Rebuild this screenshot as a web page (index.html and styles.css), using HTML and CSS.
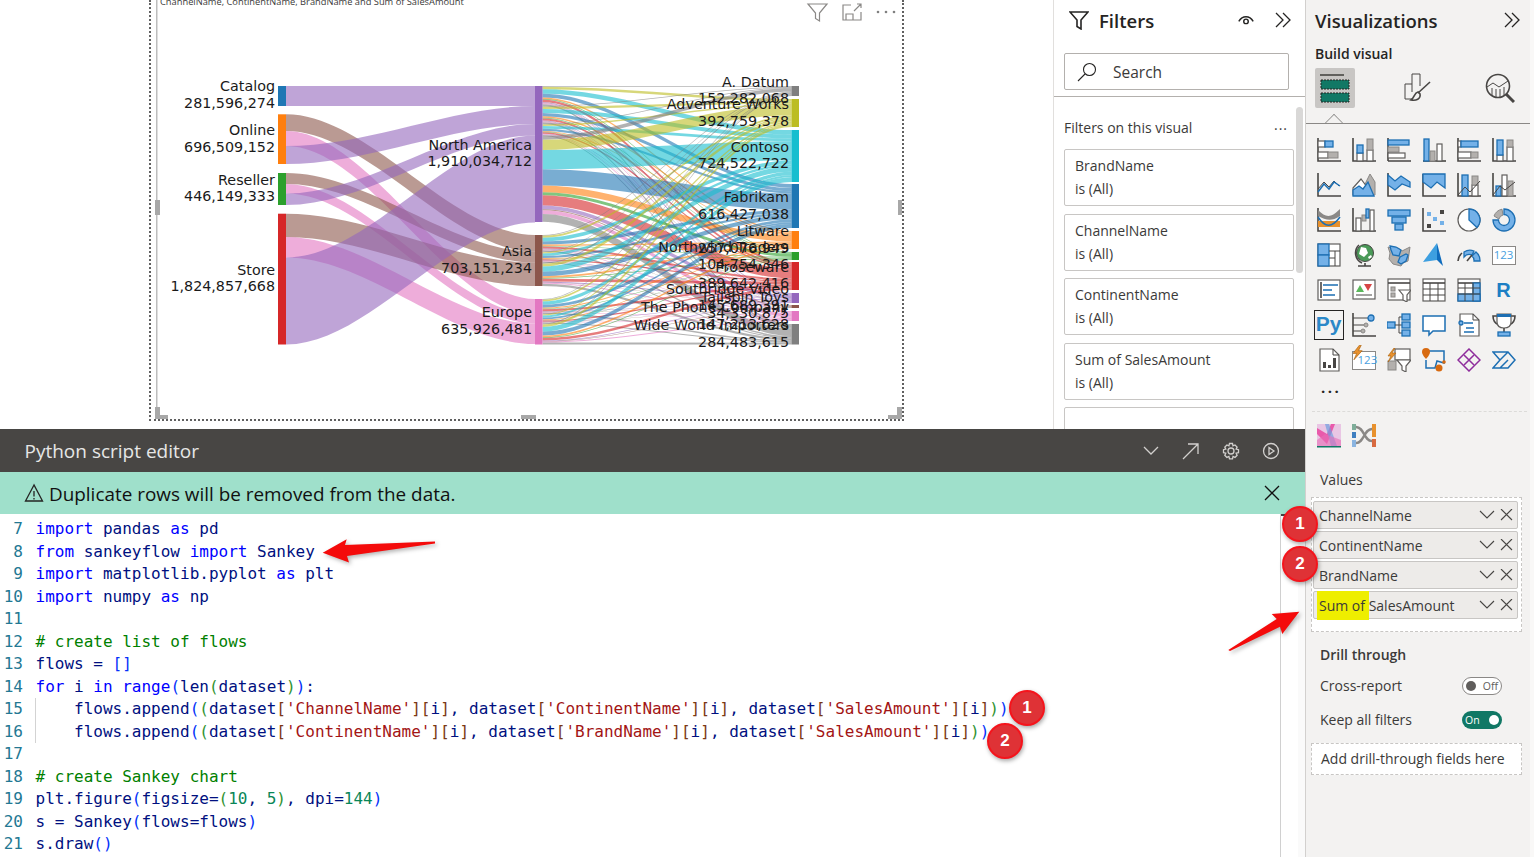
FILE: index.html
```html
<!DOCTYPE html>
<html lang="en">
<head>
    <meta charset="UTF-8">
    <title>Python script editor - Sankey</title>
    <link rel="stylesheet" href="styles.css">
</head>
<body>
<div class="main">
    <div class="report">
        <!-- Report canvas -->
        <div class="canvas">
            <div class="visual">
                <svg class="chart" viewBox="151 0 751 419">
                    <rect class="frame-line" x="156" y="0" width="1.5" height="418"/>
                    <text class="chart-title" x="160" y="5">ChannelName, ContinentName, BrandName and Sum of SalesAmount</text>
                    <g id="flows"></g>
                    <g class="nodes">
                        <rect x="278" y="86" width="8" height="20" fill="#1f77b4"/>
                        <rect x="278" y="114.3" width="8" height="49.7" fill="#ff7f0e"/>
                        <rect x="278" y="173" width="8" height="32" fill="#2ca02c"/>
                        <rect x="278" y="213.7" width="8" height="130.8" fill="#d62728"/>
                        <rect x="535" y="86" width="7.5" height="136" fill="#9467bd"/>
                        <rect x="535" y="235" width="7.5" height="51" fill="#8c564b"/>
                        <rect x="535" y="299" width="7.5" height="45.5" fill="#e377c2"/>
                        <rect x="791.5" y="86" width="7.5" height="10" fill="#7f7f7f"/>
                        <rect x="791.5" y="99" width="7.5" height="28" fill="#bcbd22"/>
                        <rect x="791.5" y="130" width="7.5" height="52" fill="#17becf"/>
                        <rect x="791.5" y="184" width="7.5" height="44" fill="#1f77b4"/>
                        <rect x="791.5" y="231" width="7.5" height="18" fill="#ff7f0e"/>
                        <rect x="791.5" y="252" width="7.5" height="8" fill="#2ca02c"/>
                        <rect x="791.5" y="262" width="7.5" height="28" fill="#d62728"/>
                        <rect x="791.5" y="293" width="7.5" height="10" fill="#9467bd"/>
                        <rect x="791.5" y="305" width="7.5" height="3" fill="#8c564b"/>
                        <rect x="791.5" y="311" width="7.5" height="10" fill="#e377c2"/>
                        <rect x="791.5" y="324" width="7.5" height="20.5" fill="#7f7f7f"/>
                    </g>
                    <g class="labels">
                        <text x="275" y="91">Catalog</text><text x="275" y="107.5">281,596,274</text>
                        <text x="275" y="135">Online</text><text x="275" y="151.5">696,509,152</text>
                        <text x="275" y="185">Reseller</text><text x="275" y="201">446,149,333</text>
                        <text x="275" y="275">Store</text><text x="275" y="291">1,824,857,668</text>
                        <text x="532" y="150">North America</text><text x="532" y="166">1,910,034,712</text>
                        <text x="532" y="256">Asia</text><text x="532" y="273">703,151,234</text>
                        <text x="532" y="317">Europe</text><text x="532" y="334">635,926,481</text>
                        <text x="789" y="87">A. Datum</text><text x="789" y="102.5">152,282,068</text>
                        <text x="789" y="109">Adventure Works</text><text x="789" y="125.5">392,759,378</text>
                        <text x="789" y="151.5">Contoso</text><text x="789" y="168">724,522,722</text>
                        <text x="789" y="202">Fabrikam</text><text x="789" y="218.5">616,427,038</text>
                        <text x="789" y="236">Litware</text><text x="789" y="252.5">257,076,949</text>
                        <text x="789" y="252">Northwind Traders</text><text x="789" y="268.5">104,754,346</text>
                        <text x="789" y="272">Proseware</text><text x="789" y="288">389,642,416</text>
                        <text x="789" y="293.5">Southridge Video</text><text x="789" y="310">145,689,391</text>
                        <text x="789" y="302">Tailspin Toys</text><text x="789" y="318">34,330,875</text>
                        <text x="789" y="312">The Phone Company</text><text x="789" y="328.5">147,213,628</text>
                        <text x="789" y="330">Wide World Importers</text><text x="789" y="346.5">284,483,615</text>
                    </g>
                    <!-- hover icons of the visual -->
                    <path class="vis-ico" d="M808 4h19l-7.500 9v8l-4-2.500v-5.500z"/>
                    <path class="vis-ico" d="M851 5h-8v15h18v-8M846 20v-6h7v6M854 11l7-7M857 4h4v4"/>
                    <g fill="#808080"><circle cx="878" cy="12" r="1.300"/><circle cx="886" cy="12" r="1.300"/><circle cx="894" cy="12" r="1.300"/></g>
                    <!-- resize handles -->
                    <g fill="#a8a8a8">
                        <rect x="155" y="200" width="5" height="15"/>
                        <rect x="898" y="200" width="5" height="15"/>
                        <rect x="521" y="415" width="15" height="4"/>
                        <path d="M155 407h5v8h8v4h-13z"/>
                        <path d="M902 407v12h-14v-4h9v-8z"/>
                    </g>
                </svg>
            </div>
        </div>

        <!-- Filters pane -->
        <div class="filters">
            <div class="pane-head">
                <svg class="head-ico" viewBox="0 0 20 20"><path d="M1 2h18l-7 8v9l-4-2.500v-6.500z"/></svg>
                <span class="pane-title">Filters</span>
                <svg class="eye-ico" viewBox="0 0 20 14"><path d="M2 8c4-7 12-7 16 0"/><circle cx="10" cy="8" r="2.500"/></svg>
                <svg class="chev-ico" viewBox="0 0 16 16"><path d="M1 1l7 7-7 7M8 1l7 7-7 7"/></svg>
            </div>
            <div class="search">
                <svg class="search-ico" viewBox="0 0 20 20"><circle cx="12.500" cy="7.500" r="6"/><path d="M8 12l-7 7"/></svg>
                <span>Search</span>
            </div>
            <div class="filter-list">
                <div class="filter-caption"><span>Filters on this visual</span><span class="more">...</span></div>
                <div class="filter-card">BrandName<br>is (All)</div>
                <div class="filter-card">ChannelName<br>is (All)</div>
                <div class="filter-card">ContinentName<br>is (All)</div>
                <div class="filter-card">Sum of SalesAmount<br>is (All)</div>
                <div class="filter-card"></div>
                <div class="filter-scroll"></div>
            </div>
        </div>
    </div>

    <!-- Python script editor -->
    <div class="editor">
        <div class="editor-head">
            <span class="editor-title">Python script editor</span>
            <svg class="ed-ico" viewBox="0 0 20 20"><path d="M3 6l7 7 7-7"/></svg>
            <svg class="ed-ico" viewBox="0 0 20 20"><path d="M2 18L17 3M7 3h10v10"/></svg>
            <svg class="ed-ico" viewBox="0 0 20 20"><circle cx="10" cy="10" r="3"/><path d="M8.500 2.500h3l.5 2.400 2-.9 2.100 2.100-1 2 2.400.6v3l-2.400.5 1 2.100-2.100 2.100-2-1-.5 2.400h-3l-.6-2.400-2 1-2.100-2.100 1-2.100-2.300-.5v-3l2.300-.6-1-2 2.100-2.100 2 .9z"/></svg>
            <svg class="ed-ico" viewBox="0 0 20 20"><circle cx="10" cy="10" r="7.500"/><path d="M8 6.500l5 3.500-5 3.500z"/></svg>
        </div>
        <div class="alert">
            <svg class="warn-ico" viewBox="0 0 20 20"><path d="M10 2L1.500 18h17zM10 8v5.500M10 15v1.500"/></svg>
            <span class="alert-text">Duplicate rows will be removed from the data.</span>
            <svg class="close-ico" viewBox="0 0 16 16"><path d="M1 1l14 14M15 1L1 15"/></svg>
        </div>
        <div class="code-wrap">
            <div class="code">
                <div class="ln"><i>7</i><span class="k">import</span> pandas <span class="k">as</span> pd</div>
                <div class="ln"><i>8</i><span class="k">from</span> sankeyflow <span class="k">import</span> Sankey</div>
                <div class="ln"><i>9</i><span class="k">import</span> matplotlib.pyplot <span class="k">as</span> plt</div>
                <div class="ln"><i>10</i><span class="k">import</span> numpy <span class="k">as</span> np</div>
                <div class="ln"><i>11</i></div>
                <div class="ln"><i>12</i><span class="c"># create list of flows</span></div>
                <div class="ln"><i>13</i>flows = <span class="b1">[]</span></div>
                <div class="ln"><i>14</i><span class="k">for</span> i <span class="k">in</span> <span class="k">range</span><span class="b1">(</span>len<span class="b2">(</span>dataset<span class="b2">)</span><span class="b1">)</span>:</div>
                <div class="ln guide"><i>15</i>    flows.append<span class="b1">(</span><span class="b2">(</span>dataset<span class="b3">[</span><span class="s">'ChannelName'</span><span class="b3">][</span>i<span class="b3">]</span>, dataset<span class="b3">[</span><span class="s">'ContinentName'</span><span class="b3">][</span>i<span class="b3">]</span>, dataset<span class="b3">[</span><span class="s">'SalesAmount'</span><span class="b3">][</span>i<span class="b3">]</span><span class="b2">)</span><span class="b1">)</span></div>
                <div class="ln guide"><i>16</i>    flows.append<span class="b1">(</span><span class="b2">(</span>dataset<span class="b3">[</span><span class="s">'ContinentName'</span><span class="b3">][</span>i<span class="b3">]</span>, dataset<span class="b3">[</span><span class="s">'BrandName'</span><span class="b3">][</span>i<span class="b3">]</span>, dataset<span class="b3">[</span><span class="s">'SalesAmount'</span><span class="b3">][</span>i<span class="b3">]</span><span class="b2">)</span><span class="b1">)</span></div>
                <div class="ln"><i>17</i></div>
                <div class="ln"><i>18</i><span class="c"># create Sankey chart</span></div>
                <div class="ln"><i>19</i>plt.figure<span class="b1">(</span>figsize=<span class="b2">(</span><span class="n">10</span>, <span class="n">5</span><span class="b2">)</span>, dpi=<span class="n">144</span><span class="b1">)</span></div>
                <div class="ln"><i>20</i>s = Sankey<span class="b1">(</span>flows=flows<span class="b1">)</span></div>
                <div class="ln"><i>21</i>s.draw<span class="b1">()</span></div>
            </div>
            <div class="code-scroll"></div>
        </div>
    </div>
</div>

<!-- Visualizations pane -->
<div class="viz">
    <div class="pane-head viz-head">
        <span class="pane-title">Visualizations</span>
        <svg class="chev-ico" viewBox="0 0 16 16"><path d="M1 1l7 7-7 7M8 1l7 7-7 7"/></svg>
    </div>
    <div class="build-label">Build visual</div>
    <div class="build-tabs">
        <div class="tab active">
            <svg viewBox="0 0 30 30" width="30" height="30"><path class="a" d="M0 2h24"/><rect class="grid-cell" x="1" y="7" width="28" height="9"/><rect class="grid-cell" x="1" y="20" width="28" height="9"/></svg>
        </div>
        <div class="tab">
            <svg viewBox="0 0 30 30" width="30" height="30"><path class="a thin" d="M9 26H2V11h7V1h8v12M9 11v8"/><path class="a" d="M27 9L15 20"/><path class="a" d="M15 19c-4 1-3 5-7 8 5 1 10-1 9-6z"/></svg>
        </div>
        <div class="tab">
            <svg viewBox="0 0 30 30" width="30" height="30"><circle class="a" cx="13" cy="13" r="11.500"/><path class="a thin" d="M2 14l6-4 6 4 9-6M7 15v8M11 16v8M15 16v8M19 14v8"/><path class="a thick" d="M21 21l8 8"/></svg>
        </div>
    </div>
    <div class="build-rule"><span class="notch"></span></div>

    <div class="gallery">
        <!-- row 1 -->
        <svg class="ico" viewBox="0 0 24 24"><path class="a" d="M1 0v23h23"/><rect class="w" x="1" y="3" width="7" height="6"/><rect class="b" x="8" y="3" width="8" height="6"/><rect class="w" x="1" y="14" width="10" height="6"/><rect class="g" x="11" y="14" width="10" height="6"/></svg>
        <svg class="ico" viewBox="0 0 24 24"><path class="a" d="M1 0v23h23"/><rect class="w" x="5" y="15" width="6" height="8"/><rect class="b" x="5" y="7" width="6" height="8"/><rect class="w" x="15" y="12" width="6" height="11"/><rect class="g" x="15" y="1" width="6" height="11"/></svg>
        <svg class="ico" viewBox="0 0 24 24"><path class="a" d="M1 23h23M1 0v23"/><rect class="b" x="1" y="2" width="21" height="5"/><rect class="g" x="1" y="9" width="11" height="5"/><rect class="w" x="1" y="15" width="17" height="5"/></svg>
        <svg class="ico" viewBox="0 0 24 24"><path class="a" d="M1 23h23"/><rect class="b" x="2" y="1" width="5" height="22"/><rect class="g" x="8" y="13" width="5" height="10"/><rect class="w" x="15" y="6" width="5" height="17"/></svg>
        <svg class="ico" viewBox="0 0 24 24"><path class="a" d="M1 0v23h23"/><rect class="w" x="1" y="3" width="3" height="6"/><rect class="b" x="4" y="3" width="17" height="6"/><rect class="w" x="1" y="14" width="13" height="6"/><rect class="g" x="14" y="14" width="7" height="6"/></svg>
        <svg class="ico" viewBox="0 0 24 24"><path class="a" d="M1 0v23h23"/><rect class="w" x="5" y="17" width="6" height="6"/><rect class="b" x="5" y="2" width="6" height="15"/><rect class="w" x="15" y="9" width="6" height="14"/><rect class="g" x="15" y="2" width="6" height="7"/></svg>
        <!-- row 2 -->
        <svg class="ico" viewBox="0 0 24 24"><path class="a" d="M1 0v23h23"/><path class="a thin" d="M1 16l6-7 5 5 5-6 5 5"/><path class="l" d="M1 19l6-8 5 5 5-7 6 4"/></svg>
        <svg class="ico" viewBox="0 0 24 24"><path class="g" d="M8 22L15 7l3-6 5 8v13z"/><path class="w" d="M1 15l8-9 6 8-4 8H1z"/><path class="b" d="M1 23v-6l6-4 4 3 5-7 6 14z"/></svg>
        <svg class="ico" viewBox="0 0 24 24"><path class="a" d="M1 0v23h23"/><path class="b" d="M1 2l7 6 6-5 9 6v5l-8-3-7 6-7-5z"/></svg>
        <svg class="ico" viewBox="0 0 24 24"><path class="a" d="M1 1v22h23"/><path class="b" d="M1 1h22v14l-8-6-6 6-8-6z"/></svg>
        <svg class="ico" viewBox="0 0 24 24"><path class="a" d="M1 0v23h23"/><rect class="b" x="5" y="2" width="6" height="21"/><rect class="w" x="15" y="12" width="6" height="11"/><rect class="g" x="15" y="3" width="6" height="9"/><path class="a thin" d="M1 22l7-8 5 5 10-11"/></svg>
        <svg class="ico" viewBox="0 0 24 24"><path class="a" d="M1 0v23h23"/><rect class="b" x="4" y="13" width="5" height="10"/><rect class="w" x="10" y="2" width="5" height="21"/><rect class="g" x="16" y="8" width="5" height="15"/><path class="a thin" d="M1 22l7-9 5 4 10-8"/></svg>
        <!-- row 3 -->
        <svg class="ico" viewBox="0 0 24 24"><path class="a" d="M1 0v23h23"/><path d="M1 2c8 8 13 8 22-1v7c-9 6-14 4-22 0z" fill="#8a8886"/><path d="M1 13h22v6H1z" fill="#e8912d"/><path class="l" d="M1 9c7 11 14 11 22 0" stroke-width="2.400"/></svg>
        <svg class="ico" viewBox="0 0 24 24"><path class="a" d="M1 0v23h23"/><rect class="w" x="4" y="10" width="5" height="13"/><rect class="g" x="10" y="7" width="4" height="6"/><rect class="b" x="14" y="1" width="3" height="9"/><rect class="w" x="18" y="2" width="4" height="21"/></svg>
        <svg class="ico" viewBox="0 0 24 24"><rect class="b" x="1" y="2" width="22" height="6"/><rect class="b" x="5" y="9" width="14" height="6"/><rect class="b" x="8" y="16" width="8" height="6"/></svg>
        <svg class="ico" viewBox="0 0 24 24"><path class="a" d="M1 0v23h23"/><rect x="5" y="4" width="4" height="4" fill="#74b1e8"/><rect x="11" y="9" width="4" height="4" fill="#74b1e8"/><rect x="18" y="2" width="4" height="4" fill="#484644"/><rect x="5" y="16" width="4" height="4" fill="#484644"/><rect x="18" y="13" width="4" height="4" fill="#74b1e8"/></svg>
        <svg class="ico" viewBox="0 0 24 24"><circle class="w" cx="12" cy="12" r="11"/><path class="b" d="M12 1a11 11 0 0 1 8 18.500L12 12z"/></svg>
        <svg class="ico" viewBox="0 0 24 24"><path class="g" d="M2 8a11 11 0 0 1 8-6.800l1 5.800a5.500 5.500 0 0 0-4 4z"/><path class="b" fill-rule="evenodd" d="M12 1a11 11 0 1 1-11 11h5.500a5.500 5.500 0 1 0 5.500-5.500z"/></svg>
        <!-- row 4 -->
        <svg class="ico" viewBox="0 0 24 24"><rect class="w" x="1" y="1" width="22" height="22"/><rect class="b" x="1" y="1" width="11" height="11"/><rect class="b" x="1" y="12" width="11" height="11"/><path class="a thin" d="M12 8h11M18 8v15M12 15h6"/></svg>
        <svg class="ico" viewBox="0 0 24 24"><circle cx="13" cy="10" r="8.500" fill="#4a9a58" stroke="#484644"/><path d="M9 4l5 1 2 5-4 4-5-3zM16 14l3-2 1 2-3 2z" fill="#fff"/><path class="a" d="M7 2a11 11 0 0 0 3 18M6 23h13M13 20v3"/></svg>
        <svg class="ico" viewBox="0 0 24 24"><path class="g" d="M1 4l6 2 4-1 4 3 8-4-2 14-5 2-2 3-8-2-4-5 1-6z"/><path class="b" d="M3 3l6 1 5 3-2 6-6-1-2-5zM13 14l6-3 2 1-2 6-5 3-3-2z"/></svg>
        <svg class="ico" viewBox="0 0 24 24"><path d="M15 0l-14 19 14-2z" fill="#3d9fe0"/><path d="M15 0v17l6 6z" fill="#0f6cbd"/></svg>
        <svg class="ico" viewBox="0 0 24 24"><path class="a" d="M1 18a11 11 0 0 1 4-8"/><path class="b" d="M7 9a11 11 0 0 1 10-1l-2 4a7 7 0 0 0-8 2zM19 9a11 11 0 0 1 4 9h-6a6 6 0 0 0-2-5z"/><path class="a" d="M10 18l5-6"/></svg>
        <div class="ico card-ico"><span>123</span></div>
        <!-- row 5 -->
        <svg class="ico" viewBox="0 0 24 24"><rect class="w" x="1" y="2" width="22" height="20"/><path class="a" d="M4 4v16"/><path class="l" d="M6 7h15M6 12h9M6 17h12" stroke-width="2"/></svg>
        <svg class="ico" viewBox="0 0 24 24"><rect class="w" x="1" y="2" width="22" height="19"/><path d="M4 14l4-7 4 7z" fill="#5cb85c"/><path d="M12 6h8l-4 7z" fill="#d64545"/><path class="a thin" d="M4 17h16"/></svg>
        <svg class="ico" viewBox="0 0 24 24"><rect class="w" x="1" y="1" width="22" height="21"/><path class="a" d="M1 5h22"/><rect class="g" x="4" y="9" width="4" height="4"/><rect class="g" x="4" y="15" width="4" height="4"/><path class="w" d="M12 12h12l-4 5v7l-4-2v-5z"/></svg>
        <svg class="ico" viewBox="0 0 24 24"><rect class="w" x="1" y="1" width="22" height="22"/><path class="a" d="M1 5h22"/><path class="a thin" d="M8 5v18M16 5v18M1 11h22M1 17h22"/></svg>
        <svg class="ico" viewBox="0 0 24 24"><rect class="w" x="1" y="1" width="22" height="22"/><path class="a" d="M1 5h22"/><rect class="b" x="16" y="5" width="7" height="18"/><rect class="b" x="1" y="16" width="22" height="7"/><path class="a thin" d="M8 5v18M16 5v18M1 10h22M1 16h22"/></svg>
        <div class="ico letter-ico">R</div>
        <!-- row 6 -->
        <div class="py-ico">Py</div>
        <svg class="ico" viewBox="0 0 24 24"><path class="a" d="M1 0v23h23"/><path class="a thin" d="M1 5h15M1 12h11M1 18h8"/><circle class="b" cx="19" cy="5" r="3"/><circle class="g" cx="14" cy="12" r="2"/><circle class="g" cx="11" cy="18" r="2"/></svg>
        <svg class="ico" viewBox="0 0 24 24"><rect class="b" x="0" y="9" width="8" height="6"/><path class="a thin" d="M8 12h4M12 4v16M12 4h3M12 12h3M12 20h3"/><rect class="b" x="15" y="1" width="8" height="6"/><rect class="b" x="15" y="9" width="8" height="6"/><rect class="b" x="15" y="17" width="8" height="6"/></svg>
        <svg class="ico" viewBox="0 0 24 24"><path class="w blue-line" d="M1 3h22v15H11l-4 4v-4H1z"/></svg>
        <svg class="ico" viewBox="0 0 24 24"><path class="w" d="M3 1h13l6 6v16H3z"/><path class="a thin" d="M16 1v6h6"/><path class="l" d="M7 10h9M9 15h8M7 19h10"/><circle class="b" cx="4" cy="10" r="2"/></svg>
        <svg class="ico" viewBox="0 0 24 24"><path class="a" d="M5 3H1c0 6 3 8 6 9M19 3h4c0 6-3 8-6 9"/><path class="w" d="M5 1h14v8c0 4-3 6-7 6s-7-2-7-6z"/><rect x="5" y="1" width="14" height="3" fill="#1d6fb3"/><path class="a" d="M12 15v4"/><rect class="b" x="6" y="19" width="12" height="4"/></svg>
        <!-- row 7 -->
        <svg class="ico" viewBox="0 0 24 24"><path class="w" d="M3 1h13l6 6v16H3z"/><path class="a thin" d="M16 1v6h6"/><path d="M6 14h3v6H6zM11 17h3v3h-3zM16 10h3v10h-3z" fill="#484644"/></svg>
        <div class="ico card-ico bolt-card"><svg class="bolt" viewBox="0 0 12 16"><path d="M7 0L0 9h4l-3 7 9-10H6l3-6z"/></svg><span>123</span></div>
        <svg class="ico" viewBox="0 0 24 24"><rect class="w" x="8" y="1" width="15" height="11"/><rect class="g" x="1" y="13" width="8" height="9"/><path class="w" d="M10 12h14l-5 6v6l-4-2v-4z"/><path d="M7 0L1 8h3l-3 6 8-9H5l3-5z" fill="#e8912d" stroke="#a85f0c" stroke-width=".6"/></svg>
        <svg class="ico" viewBox="0 0 24 24"><path class="l" d="M5 8V3h17v12l-7-2-2 7H4v-8" stroke-width="2.400"/><path d="M4 0a4 4 0 0 1 4 4c0 3-4 7-4 7S0 7 0 4a4 4 0 0 1 4-4z" fill="#d86a10"/><circle cx="17" cy="20" r="3.500" fill="#d86a10"/><circle cx="22" cy="14" r="1.800" fill="#d86a10"/></svg>
        <svg class="ico" viewBox="0 0 24 24"><path d="M12 1l11 11-11 11L1 12z" fill="none" stroke="#8e2d9c" stroke-width="1.500"/><path d="M7 7l5 5-5 5M17 7l-5 5 5 5" fill="none" stroke="#8e2d9c" stroke-width="1.500"/></svg>
        <svg class="ico" viewBox="0 0 24 24"><path class="l" d="M1 4h15l7 8-7 8H1l7-8zM8 12l8-8M8 20l8-8"/></svg>
    </div>
    <div class="gallery-more">...</div>
    <div class="dash-rule"></div>
    <div class="custom-visuals">
        <svg class="ico" viewBox="0 0 24 24">
            <rect width="24" height="22" fill="#e9c6e4"/>
            <path d="M0 4l10 6 4-10h4L10 20 0 10z" fill="#e83e9c" opacity=".8"/>
            <path d="M8 0l6 22h6L12 0z" fill="#6f9fe0" opacity=".7"/>
            <path d="M0 16l8-6 16 6v6H0z" fill="#e86db5" opacity=".6"/>
            <rect y="22" width="24" height="1.500" fill="#117865"/>
        </svg>
        <svg class="ico" viewBox="0 0 24 24">
            <rect x="0" y="0" width="4" height="6" fill="#7fae9a"/><rect x="0" y="8" width="4" height="6" fill="#3f7fc0"/><rect x="0" y="16" width="4" height="7" fill="#8ab4e0"/>
            <rect x="20" y="0" width="4" height="13" fill="#e8912d"/><rect x="20" y="15" width="4" height="8" fill="#d86a40"/>
            <path d="M4 3c8 0 8 14 16 14M4 19C12 19 12 5 20 5" fill="none" stroke="#8a8886" stroke-width="2.500"/>
        </svg>
    </div>

    <div class="section-label">Values</div>
    <div class="well">
        <div class="field"><span class="field-name">ChannelName</span><svg class="field-ico" viewBox="0 0 34 12"><path d="M1 2l7 7 7-7M22 0l11 11M33 0L22 11"/></svg></div>
        <div class="field"><span class="field-name">ContinentName</span><svg class="field-ico" viewBox="0 0 34 12"><path d="M1 2l7 7 7-7M22 0l11 11M33 0L22 11"/></svg></div>
        <div class="field"><span class="field-name">BrandName</span><svg class="field-ico" viewBox="0 0 34 12"><path d="M1 2l7 7 7-7M22 0l11 11M33 0L22 11"/></svg></div>
        <div class="field"><span class="field-name"><mark>Sum of </mark>SalesAmount</span><svg class="field-ico" viewBox="0 0 34 12"><path d="M1 2l7 7 7-7M22 0l11 11M33 0L22 11"/></svg></div>
    </div>

    <div class="section-label drill">Drill through</div>
    <div class="toggle-row first">
        <span>Cross-report</span>
        <span class="toggle off"><b></b>Off</span>
    </div>
    <div class="toggle-row">
        <span>Keep all filters</span>
        <span class="toggle on">On<b></b></span>
    </div>
    <div class="drill-box">Add drill-through fields here</div>
</div>

<!-- Red call-outs drawn on top of the screenshot -->
<svg class="arrows" viewBox="0 0 1534 857">
    <path d="M322.700 552.700L346.700 539.300 345 545 435 541.500 435 543.500 347 556 349 562.500z"/>
    <path d="M1299.300 611.700L1271.700 614 1276.700 619 1228.300 650 1230 651 1280 626.700 1282.300 634z"/>
</svg>
<span class="badge badge-a">1</span>
<span class="badge badge-b">2</span>
<span class="badge badge-c">1</span>
<span class="badge badge-d">2</span>

<script src="sankey.js"></script>
</body>
</html>
```

FILE: styles.css
```css
* {
    margin: 0;
    padding: 0;
    box-sizing: border-box;
}
html, body {
    height: 100%;
}
body {
    display: flex;
    font-family: 'Open Sans', 'Noto Sans', sans-serif;
    color: #252423;
    background: #fff;
    overflow: hidden;
    position: relative;
}

.main {
    width: 1305px;
    flex: none;
    display: flex;
    flex-direction: column;
}
.report {
    height: 429px;
    flex: none;
    display: flex;
    overflow: hidden;
}

/* Canvas */
.canvas {
    width: 1054px;
    flex: none;
    padding-left: 149px;
    border-right: 1px solid #e1dfdd;
}
.visual {
    width: 755px;
    height: 421px;
    border: 2px dotted #606060;
    border-top: none;
}
.chart {
    display: block;
    width: 751px;
    height: 419px;
}
.frame-line {
    fill: #bdbdbd;
}
.chart-title {
    font-family: 'Open Sans', sans-serif;
    font-size: 9.300px;
    fill: #3b3a39;
}
.labels text {
    font-family: 'DejaVu Sans', sans-serif;
    font-size: 14.3px;
    fill: #1a1a1a;
    text-anchor: end;
}
.vis-ico {
    fill: none;
    stroke: #8a8886;
    stroke-width: 1.2;
}

/* Filters */
.filters {
    width: 251px;
    flex: none;
    display: flex;
    flex-direction: column;
}
.pane-head {
    height: 42px;
    flex: none;
    display: flex;
    align-items: center;
}
.filters .pane-head {
    padding: 0 14px 2px 15px;
}
.pane-title {
    font-size: 18.500px;
    font-weight: 600;
    color: #252423;
}
.head-ico {
    width: 20px;
    height: 20px;
    margin-right: 10px;
    fill: none;
    stroke: #252423;
    stroke-width: 1.6;
}
.eye-ico {
    width: 18px;
    height: 13px;
    margin-left: auto;
    margin-right: 20px;
    fill: none;
    stroke: #252423;
    stroke-width: 1.6;
}
.chev-ico {
    width: 16px;
    height: 16px;
    fill: none;
    stroke: #252423;
    stroke-width: 1.3;
}
.search {
    height: 37px;
    flex: none;
    margin: 11px 16px 0 10px;
    border: 1px solid #b3b0ad;
    border-radius: 2px;
    display: flex;
    align-items: center;
    font-size: 15.500px;
    color: #3b3a39;
}
.search-ico {
    width: 20px;
    height: 20px;
    margin: 0 16px 0 12px;
    fill: none;
    stroke: #252423;
    stroke-width: 1.1;
}
.filter-list {
    position: relative;
    flex: none;
    margin-top: 6px;
    padding: 21px 11px 0 10px;
    border-top: 1px solid #b3b0ad;
    height: 340px;
}
.filter-caption {
    display: flex;
    justify-content: space-between;
    font-size: 14px;
    line-height: 20px;
    margin-bottom: 11px;
    padding-right: 6px;
    color: #3b3a39;
}
.filter-caption .more {
    letter-spacing: 1px;
    line-height: 14px;
}
.filter-card {
    height: 57px;
    padding: 4px 10px 0;
    margin-bottom: 7.500px;
    border: 1px solid #c8c6c4;
    border-radius: 2px;
    font-size: 14px;
    line-height: 23px;
    color: #3b3a39;
}
.filter-scroll {
    position: absolute;
    top: 10px;
    right: 2px;
    width: 7px;
    height: 166px;
    background: #d9d8d7;
    border-radius: 4px;
}

/* Editor */
.editor {
    flex: 1;
    display: flex;
    flex-direction: column;
    min-height: 0;
}
.editor-head {
    height: 43px;
    flex: none;
    background: #484644;
    display: flex;
    align-items: center;
    padding: 0 24px 0 24.500px;
    gap: 20px;
}
.editor-title {
    font-size: 19px;
    color: #e6e6e6;
    margin-right: auto;
    padding-top: 1px;
}
.ed-ico {
    width: 20px;
    height: 20px;
    fill: none;
    stroke: #d2d0ce;
    stroke-width: 1.300;
}
.alert {
    height: 42px;
    flex: none;
    background: #9fe0cb;
    display: flex;
    align-items: center;
    padding: 0 25px 0 24px;
}
.warn-ico {
    width: 20px;
    height: 20px;
    margin-right: 5px;
    fill: none;
    stroke: #252423;
    stroke-width: 1.300;
}
.alert-text {
    font-size: 18.900px;
    color: #111;
    padding-top: 1px;
}
.close-ico {
    width: 16px;
    height: 16px;
    margin-left: auto;
    fill: none;
    stroke: #111;
    stroke-width: 1.300;
}
.code-wrap {
    flex: 1;
    display: flex;
    min-height: 0;
}
.code {
    width: 1280px;
    flex: none;
    padding-top: 4px;
    font-family: 'DejaVu Sans Mono', 'Liberation Mono', monospace;
    font-size: 16px;
    line-height: 22.500px;
    color: #001080;
    overflow: hidden;
}
.ln {
    height: 22.500px;
    position: relative;
    white-space: pre;
}
.ln i {
    display: inline-block;
    width: 23px;
    margin-right: 12.500px;
    text-align: right;
    font-style: normal;
    color: #237893;
}
.guide::before {
    content: '';
    position: absolute;
    left: 35px;
    top: 0;
    bottom: 0;
    width: 1px;
    background: #d3d3d3;
}
.k { color: #0000ff; }
.s { color: #a31515; }
.c { color: #008000; }
.n { color: #098658; }
.b1 { color: #0431fa; }
.b2 { color: #319331; }
.b3 { color: #7b3814; }
.code-scroll {
    flex: 1;
    border-left: 1px solid #d0d0d0;
    border-right: 7px solid #fafafa;
    background: linear-gradient(#444 2px, transparent 2px) no-repeat 0 0 / 17px 100%;
}

/* Visualizations */
.viz {
    width: 229px;
    flex: none;
    height: 100%;
    background: #f3f2f1;
    border-left: 1px solid #d2d0ce;
    border-right: 4px solid #f9f8f7;
    padding-left: 5px;
}
.viz-head {
    padding: 0 10px 4px 4px;
    height: 44px;
    justify-content: space-between;
}
.build-label {
    font-size: 14px;
    font-weight: 600;
    line-height: 20px;
    padding-left: 4px;
}
.build-tabs {
    display: flex;
    justify-content: space-between;
    padding: 4px 10px 0 4px;
}
.tab {
    width: 40px;
    height: 40px;
    display: flex;
    align-items: center;
    justify-content: center;
    border-radius: 2px;
}
.tab.active {
    background: #c8c6c4;
}
.grid-cell {
    fill: #117865;
    stroke: #252423;
    stroke-width: 1;
    stroke-dasharray: 2 1;
}
.build-rule {
    height: 1px;
    margin: 15px 0 0 -5px;
    background: #8a8886;
    position: relative;
}
.notch {
    position: absolute;
    left: 21px;
    top: -7px;
    width: 14px;
    height: 14px;
    background: #f3f2f1;
    border-left: 1px solid #8a8886;
    border-top: 1px solid #8a8886;
    transform: rotate(45deg) scale(.95);
    clip-path: polygon(0 0, 100% 0, 0 100%);
}

.gallery {
    display: grid;
    grid-template-columns: repeat(6, 35px);
    grid-auto-rows: 35px;
    align-items: center;
    justify-items: center;
    margin-top: 8.500px;
}
.ico {
    width: 24px;
    height: 24px;
    display: block;
}
.a { fill: none; stroke: #484644; stroke-width: 1.600; }
.a.thin { stroke-width: 1; }
.a.thick { stroke-width: 3; }
.b { fill: #74b1e8; stroke: #1d6fb3; stroke-width: 1.300; }
.g { fill: #b3b0ad; stroke: #8a8886; stroke-width: 1; }
.w { fill: #fff; stroke: #605e5c; stroke-width: 1.200; }
.l { fill: none; stroke: #1d6fb3; stroke-width: 1.500; }
.blue-line { stroke: #1d6fb3; stroke-width: 1.500; }

.card-ico {
    background: #fff;
    border: 1.500px solid #8a8886;
    height: 19px;
    font-family: 'Open Sans', sans-serif;
    font-size: 11.500px;
    line-height: 16px;
    color: #4a9fe0;
    text-align: center;
    position: relative;
}
.bolt-card span {
    padding-left: 5px;
}
.bolt {
    position: absolute;
    left: 0;
    top: -7px;
    width: 11px;
    height: 15px;
    fill: #e8912d;
    stroke: #a85f0c;
    stroke-width: .7;
}
.letter-ico {
    font-family: 'Liberation Sans', sans-serif;
    font-weight: 700;
    font-size: 20px;
    line-height: 24px;
    color: #1d7fc4;
    text-align: center;
}
.py-ico {
    width: 30px;
    height: 30px;
    border: 1px solid #252423;
    font-family: 'Liberation Sans', sans-serif;
    font-weight: 700;
    font-size: 21px;
    line-height: 26px;
    color: #2b88c8;
    text-align: center;
}
.gallery-more {
    font-size: 15px;
    font-weight: 700;
    letter-spacing: 2.500px;
    line-height: 14px;
    padding-left: 10px;
    margin-top: 2px;
}
.dash-rule {
    border-top: 1px dashed #dcdbd9;
    margin: 17px 3px 0 1px;
}
.custom-visuals {
    display: flex;
    gap: 11px;
    margin: 12px 0 0 6px;
}
.section-label {
    font-size: 14px;
    line-height: 20px;
    padding-left: 9px;
    margin-top: 22px;
    color: #3b3a39;
}
.section-label.drill {
    font-weight: 600;
    margin-top: 13px;
}
.well {
    width: 211px;
    height: 135px;
    margin-top: 7px;
    padding: 3px 3px 0 1px;
    border: 1px dashed #c8c6c4;
    background: #fff;
    display: flex;
    flex-direction: column;
    gap: 2px;
}
.field {
    height: 28px;
    flex: none;
    background: #edebe9;
    border: 1px solid #c8c6c4;
    border-radius: 2px;
    display: flex;
    align-items: center;
    justify-content: space-between;
    padding: 1px 4px 0 5px;
    font-size: 14px;
    color: #3b3a39;
}
.field-name mark {
    background: #eeee00;
    color: inherit;
    padding: 5px 0 5px 2px;
    margin-left: -2px;
}
.field-ico {
    width: 34px;
    height: 12px;
    fill: none;
    stroke: #484644;
    stroke-width: 1.100;
}
.toggle-row {
    height: 34px;
    display: flex;
    align-items: center;
    justify-content: space-between;
    padding: 0 28px 0 9px;
    font-size: 14px;
    color: #3b3a39;
}
.toggle-row.first {
    margin-top: 4px;
}
.toggle {
    width: 40px;
    height: 18px;
    border-radius: 9px;
    display: flex;
    align-items: center;
    justify-content: space-between;
    padding: 0 3px;
    font-size: 10.500px;
}
.toggle b {
    width: 10px;
    height: 10px;
    border-radius: 50%;
}
.toggle.off {
    background: #fff;
    border: 1px solid #8a8886;
    color: #605e5c;
}
.toggle.off b { background: #605e5c; }
.toggle.on {
    background: #117865;
    color: #fff;
}
.toggle.on b { background: #fff; }
.drill-box {
    width: 211px;
    height: 32px;
    margin-top: 6px;
    border: 1px dashed #c8c6c4;
    background: #fff;
    font-size: 14px;
    line-height: 30px;
    padding-left: 9px;
    color: #3b3a39;
}

/* Call-outs */
.arrows {
    position: absolute;
    left: 0;
    top: 0;
    width: 1534px;
    height: 857px;
    pointer-events: none;
    fill: #f40b0b;
    filter: drop-shadow(2px 2px 2px rgba(0, 0, 0, .3));
}
.badge {
    position: absolute;
    width: 36px;
    height: 36px;
    border-radius: 50%;
    background: #df3236;
    border: 2px solid #f5141c;
    color: #fff;
    font-family: 'Liberation Sans', sans-serif;
    font-weight: 700;
    font-size: 17px;
    line-height: 32px;
    text-align: center;
    box-shadow: 1px 2px 4px rgba(0, 0, 0, .35);
}
.badge-a { left: 1282px; top: 506px; }
.badge-b { left: 1282px; top: 546px; }
.badge-c { left: 1009px; top: 690px; }
.badge-d { left: 987px; top: 723px; }
```

FILE: sankey.js
```js
// Flows of the sankey chart: nodes are drawn in index.html, here only the bands
const svgNs = 'http://www.w3.org/2000/svg';
const flowsGroup = document.getElementById('flows');

function addFlow(x1, y1, x2, y2, h, color) {
    const c1 = x1 + (x2 - x1) / 3;
    const c2 = x2 - (x2 - x1) / 3;
    const d = `M${x1} ${y1}C${c1} ${y1} ${c2} ${y2} ${x2} ${y2}` +
        `L${x2} ${y2 + h}C${c2} ${y2 + h} ${c1} ${y1 + h} ${x1} ${y1 + h}Z`;
    const path = document.createElementNS(svgNs, 'path');
    path.setAttribute('d', d);
    path.setAttribute('fill', color);
    path.setAttribute('fill-opacity', '0.6');
    flowsGroup.appendChild(path);
}

const NA = '#9467bd', ASIA = '#8c564b', EUROPE = '#e377c2';

// channel -> continent: from y, to y, height, colour
[
    [86, 86, 20, NA],
    [114.3, 235, 16.7, ASIA],
    [131, 299, 15, EUROPE],
    [146, 106, 18, NA],
    [173, 251.7, 11, ASIA],
    [184, 314, 9.5, EUROPE],
    [193.5, 124, 11.5, NA],
    [213.7, 262.7, 23.3, ASIA],
    [237, 323.5, 20.5, EUROPE],
    [257.5, 135.5, 87, NA]
].forEach(f => addFlow(286, f[0], 535, f[1], f[2], f[3]));

// continent -> brand, every channel part of a continent is split over all brands
const brands = [
    { color: '#7f7f7f', y: 86, h: 10 },
    { color: '#bcbd22', y: 99, h: 28 },
    { color: '#17becf', y: 130, h: 52 },
    { color: '#1f77b4', y: 184, h: 44 },
    { color: '#ff7f0e', y: 231, h: 18 },
    { color: '#2ca02c', y: 252, h: 8 },
    { color: '#d62728', y: 262, h: 28 },
    { color: '#9467bd', y: 293, h: 10 },
    { color: '#8c564b', y: 305, h: 3 },
    { color: '#e377c2', y: 311, h: 10 },
    { color: '#7f7f7f', y: 324, h: 20.5 }
];
const parts = [
    [86, 20], [106, 18], [124, 12], [136, 86],
    [235, 16.7], [251.7, 11], [262.7, 23.3],
    [299, 15], [314, 9.5], [323.5, 21]
];
const total = parts.reduce((sum, p) => sum + p[1], 0);

parts.forEach(part => {
    let y = part[0];
    brands.forEach(brand => {
        const h = part[1] * brand.h / total;
        addFlow(542.5, y, 791.5, brand.y, h, brand.color);
        y += h;
        brand.y += h;
    });
});
```
